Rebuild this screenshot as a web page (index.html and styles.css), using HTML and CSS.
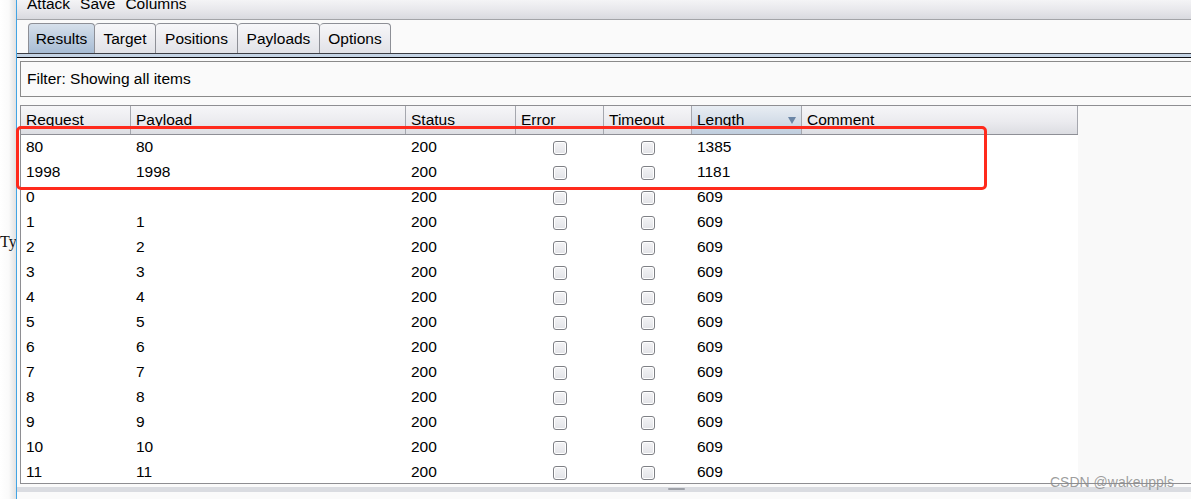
FILE: index.html
```html
<!DOCTYPE html>
<html>
<head>
<meta charset="utf-8">
<link rel="stylesheet" href="styles.css">
</head>
<body>
<div class="page">
  <div class="strip"><span class="strip-text">Type</span></div>
  <div class="app">
    <div class="menubar">
      <span class="menu">Attack</span><span class="menu">Save</span><span class="menu">Columns</span>
    </div>
    <div class="tabbar">
      <div class="tab t-results active">Results</div>
      <div class="tab t-target">Target</div>
      <div class="tab t-positions">Positions</div>
      <div class="tab t-payloads">Payloads</div>
      <div class="tab t-options">Options</div>
    </div>
    <div class="tabline"></div>
    <div class="content">
      <div class="filter">Filter: Showing all items</div>
      <div class="tablepane">
        <div class="thead">
          <div class="th c-req">Request</div>
          <div class="th c-pay">Payload</div>
          <div class="th c-st">Status</div>
          <div class="th c-err">Error</div>
          <div class="th c-to">Timeout</div>
          <div class="th c-len sorted">Length<span class="arrow"></span></div>
          <div class="th c-com">Comment</div>
        </div>
        <div class="tbody">
          <div class="tr"><div class="td c-req">80</div><div class="td c-pay">80</div><div class="td c-st">200</div><div class="td c-err"><span class="cb"></span></div><div class="td c-to"><span class="cb"></span></div><div class="td c-len">1385</div><div class="td c-com"></div></div>
          <div class="tr"><div class="td c-req">1998</div><div class="td c-pay">1998</div><div class="td c-st">200</div><div class="td c-err"><span class="cb"></span></div><div class="td c-to"><span class="cb"></span></div><div class="td c-len">1181</div><div class="td c-com"></div></div>
          <div class="tr"><div class="td c-req">0</div><div class="td c-pay"></div><div class="td c-st">200</div><div class="td c-err"><span class="cb"></span></div><div class="td c-to"><span class="cb"></span></div><div class="td c-len">609</div><div class="td c-com"></div></div>
          <div class="tr"><div class="td c-req">1</div><div class="td c-pay">1</div><div class="td c-st">200</div><div class="td c-err"><span class="cb"></span></div><div class="td c-to"><span class="cb"></span></div><div class="td c-len">609</div><div class="td c-com"></div></div>
          <div class="tr"><div class="td c-req">2</div><div class="td c-pay">2</div><div class="td c-st">200</div><div class="td c-err"><span class="cb"></span></div><div class="td c-to"><span class="cb"></span></div><div class="td c-len">609</div><div class="td c-com"></div></div>
          <div class="tr"><div class="td c-req">3</div><div class="td c-pay">3</div><div class="td c-st">200</div><div class="td c-err"><span class="cb"></span></div><div class="td c-to"><span class="cb"></span></div><div class="td c-len">609</div><div class="td c-com"></div></div>
          <div class="tr"><div class="td c-req">4</div><div class="td c-pay">4</div><div class="td c-st">200</div><div class="td c-err"><span class="cb"></span></div><div class="td c-to"><span class="cb"></span></div><div class="td c-len">609</div><div class="td c-com"></div></div>
          <div class="tr"><div class="td c-req">5</div><div class="td c-pay">5</div><div class="td c-st">200</div><div class="td c-err"><span class="cb"></span></div><div class="td c-to"><span class="cb"></span></div><div class="td c-len">609</div><div class="td c-com"></div></div>
          <div class="tr"><div class="td c-req">6</div><div class="td c-pay">6</div><div class="td c-st">200</div><div class="td c-err"><span class="cb"></span></div><div class="td c-to"><span class="cb"></span></div><div class="td c-len">609</div><div class="td c-com"></div></div>
          <div class="tr"><div class="td c-req">7</div><div class="td c-pay">7</div><div class="td c-st">200</div><div class="td c-err"><span class="cb"></span></div><div class="td c-to"><span class="cb"></span></div><div class="td c-len">609</div><div class="td c-com"></div></div>
          <div class="tr"><div class="td c-req">8</div><div class="td c-pay">8</div><div class="td c-st">200</div><div class="td c-err"><span class="cb"></span></div><div class="td c-to"><span class="cb"></span></div><div class="td c-len">609</div><div class="td c-com"></div></div>
          <div class="tr"><div class="td c-req">9</div><div class="td c-pay">9</div><div class="td c-st">200</div><div class="td c-err"><span class="cb"></span></div><div class="td c-to"><span class="cb"></span></div><div class="td c-len">609</div><div class="td c-com"></div></div>
          <div class="tr"><div class="td c-req">10</div><div class="td c-pay">10</div><div class="td c-st">200</div><div class="td c-err"><span class="cb"></span></div><div class="td c-to"><span class="cb"></span></div><div class="td c-len">609</div><div class="td c-com"></div></div>
          <div class="tr"><div class="td c-req">11</div><div class="td c-pay">11</div><div class="td c-st">200</div><div class="td c-err"><span class="cb"></span></div><div class="td c-to"><span class="cb"></span></div><div class="td c-len">609</div><div class="td c-com"></div></div>
        </div>
      </div>
      <div class="splitter"><span class="grip"></span></div>
    </div>
  </div>
  <div class="highlight"></div>
  <div class="watermark">CSDN @wakeuppls</div>
</div>
</body>
</html>
```
FILE: styles.css
```css
html, body {
  margin: 0;
  padding: 0;
  background: #ffffff;
}
.page {
  position: relative;
  display: flex;
  width: 1191px;
  height: 499px;
  overflow: hidden;
}
.strip {
  width: 16px;
  flex: none;
  background: linear-gradient(to right, #ffffff 0%, #fafafa 55%, #e2e2e2 100%);
  overflow: hidden;
  position: relative;
}
.strip-text {
  display: block;
  margin-top: 232px;
  font-family: "Liberation Serif", "DejaVu Serif", serif;
  font-size: 16px;
  line-height: 20px;
  color: #111;
  white-space: nowrap;
}
.app {
  flex: 1;
  display: flex;
  flex-direction: column;
  border-left: 1px solid #42a4e4;
  background: #fafafa;
  font-family: "Liberation Sans", Arial, sans-serif;
  font-size: 15.5px;
  color: #000;
}
.menubar {
  height: 19px;
  flex: none;
  border-bottom: 1px solid #a3a4a8;
  background: linear-gradient(to bottom, #f4f4f6 0%, #e8e8ec 50%, #d9dadf 100%);
  padding-left: 10px;
  display: flex;
  gap: 10px;
  overflow: hidden;
}
.menu {
  display: block;
  line-height: 14px;
  margin-top: -3px;
}
.tabbar {
  flex: none;
  display: flex;
  padding: 3px 0 0 11px;
  height: 30px;
}
.tab {
  box-sizing: border-box;
  height: 30px;
  text-align: center;
  line-height: 29px;
  border: 1px solid #8d8f96;
  border-bottom: none;
  border-left: none;
  border-radius: 4px 4px 0 0;
  background: linear-gradient(to bottom, #f7f7f9 0%, #ececf0 50%, #e1e2e7 100%);
}
.tab:first-child {
  border-left: 1px solid #8d8f96;
}
.t-results { width: 67px; }
.t-target { width: 61px; }
.t-positions { width: 82px; }
.t-payloads { width: 82px; }
.t-options { width: 71px; }
.tab.active {
  background: linear-gradient(to bottom, #d6e0eb 0%, #c0cfe0 45%, #a7bcd4 100%);
}
.tabline {
  flex: none;
  height: 3px;
  border-top: 1px solid #3b3d44;
  border-bottom: 1px solid #0c0c10;
  background: #c4d3e4;
}
.content {
  flex: 1;
  display: flex;
  flex-direction: column;
  padding: 3px 0 0 3px;
}
.filter {
  flex: none;
  height: 34px;
  border: 1px solid #8a8a8a;
  border-right: none;
  background: #fafafa;
  padding-left: 6px;
  line-height: 33px;
}
.tablepane {
  flex: none;
  margin-top: 8px;
  height: 377px;
  border: 1px solid #8e8e92;
  border-right: none;
  background: #f9f9f9;
  overflow: hidden;
}
.thead {
  display: flex;
  height: 28px;
  border-bottom: 1px solid #8e8f96;
  width: 1057px;
}
.th {
  box-sizing: border-box;
  height: 28px;
  padding: 4px 0 0 5px;
  line-height: 20px;
  border-right: 1px solid #a5a7ae;
  background: linear-gradient(to bottom, #f6f6f8 0%, #ebebef 55%, #dcdde2 100%);
  white-space: nowrap;
  position: relative;
}
.th.sorted {
  background: linear-gradient(to bottom, #e8edf3 0%, #d4dde8 55%, #bfcddd 100%);
}
.arrow {
  position: absolute;
  right: 5px;
  top: 11px;
  width: 0;
  height: 0;
  border-left: 4px solid transparent;
  border-right: 4px solid transparent;
  border-top: 7px solid #6b86a6;
}
.tbody {
  width: 1057px;
  background: #ffffff;
}
.tr {
  display: flex;
  height: 25px;
}
.td {
  box-sizing: border-box;
  height: 25px;
  padding: 1px 0 0 5px;
  line-height: 22px;
  white-space: nowrap;
}
.c-req { width: 110px; }
.c-pay { width: 275px; }
.c-st { width: 110px; }
.c-err { width: 88px; }
.c-to { width: 88px; }
.c-len { width: 110px; }
.c-com { width: 276px; }
.td.c-err, .td.c-to {
  padding: 0;
  display: flex;
  align-items: center;
  justify-content: center;
}
.cb {
  display: block;
  box-sizing: border-box;
  width: 14px;
  height: 14px;
  margin-top: 1px;
  border: 1px solid #7e8085;
  border-radius: 3px;
  background: linear-gradient(to bottom, #f4f4f6 0%, #e2e3e7 100%);
  box-shadow: inset 0 0 0 1px #ffffff;
}
.splitter {
  flex: none;
  margin-top: 3px;
  margin-left: -3px;
  height: 5px;
  background: #dadce1;
  position: relative;
}
.grip {
  position: absolute;
  left: 651px;
  top: 1px;
  width: 17px;
  height: 2px;
  border-radius: 1px;
  background: #9ea1a8;
}
.highlight {
  position: absolute;
  left: 16px;
  top: 126px;
  width: 965px;
  height: 58px;
  border: 3px solid #ff2a1c;
  border-radius: 5px;
  pointer-events: none;
}
.watermark {
  position: absolute;
  left: 1050px;
  top: 474px;
  font-family: "Liberation Sans", Arial, sans-serif;
  font-size: 14px;
  color: rgba(140, 140, 140, 0.85);
  white-space: nowrap;
}
```
